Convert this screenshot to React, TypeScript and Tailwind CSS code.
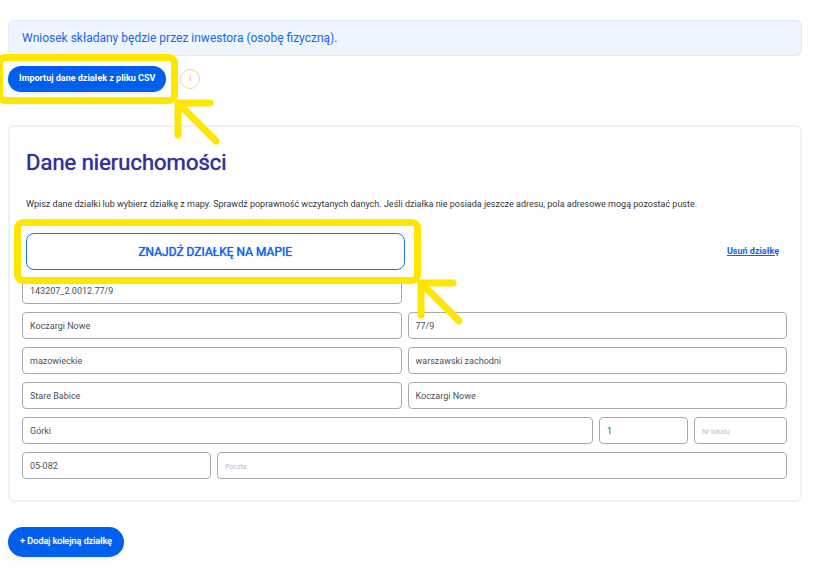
import { useState } from "react";
import type { ReactNode } from "react";

type FieldDef = {
  id: string;
  label: string;
  value: string;
};

const rows: { cols: string; fields: FieldDef[] }[] = [
  {
    cols: "grid-cols-2",
    fields: [{ id: "identyfikator", label: "Identyfikator działki", value: "143207_2.0012.77/9" }],
  },
  {
    cols: "grid-cols-2",
    fields: [
      { id: "obreb", label: "Obręb ewidencyjny", value: "Koczargi Nowe" },
      { id: "numer", label: "Nr działki", value: "77/9" },
    ],
  },
  {
    cols: "grid-cols-2",
    fields: [
      { id: "wojewodztwo", label: "Województwo", value: "mazowieckie" },
      { id: "powiat", label: "Powiat", value: "warszawski zachodni" },
    ],
  },
  {
    cols: "grid-cols-2",
    fields: [
      { id: "gmina", label: "Gmina", value: "Stare Babice" },
      { id: "miejscowosc", label: "Miejscowość", value: "Koczargi Nowe" },
    ],
  },
  {
    cols: "grid-cols-[571fr_89fr_93fr]",
    fields: [
      { id: "ulica", label: "Ulica", value: "Górki" },
      { id: "dom", label: "Nr domu", value: "1" },
      { id: "lokal", label: "Nr lokalu", value: "" },
    ],
  },
  {
    cols: "grid-cols-[189fr_570fr]",
    fields: [
      { id: "kod", label: "Kod pocztowy", value: "05-082" },
      { id: "poczta", label: "Poczta", value: "" },
    ],
  },
];

function Field({ id, label, value }: FieldDef) {
  const [text, setText] = useState(value);
  return (
    <input
      id={id}
      type="text"
      aria-label={label}
      placeholder={label}
      value={text}
      onChange={e => setText(e.target.value)}
      className="h-[27px] w-full min-w-0 rounded-[4px] border border-[#a9a9ab] bg-white px-[7px] text-[9px] text-[#4b5058] placeholder:text-[7px] placeholder:text-[#b9bcc8] focus:outline-none focus:border-[#005fec]"
    />
  );
}

/* Yellow frame with an arrow pointing at its bottom right corner */
function Highlight({ children, className, frame }: { children: ReactNode; className: string; frame: string }) {
  return (
    <div className={`relative ${className}`}>
      {children}
      <span className={`pointer-events-none absolute z-10 rounded-[9px] border-[7px] border-[#ffe600] ${frame}`}>
        <svg
          viewBox="0 0 48 48"
          className="absolute -right-[50px] -bottom-[49px] h-12 w-12"
          fill="none"
          stroke="#ffe600"
          strokeWidth="7"
          strokeLinecap="round"
          strokeLinejoin="round"
        >
          <path d="M37 5H5v32M5 5l38 38" />
        </svg>
      </span>
    </div>
  );
}

export default function App() {
  return (
    <main className="min-h-screen bg-white pt-5 pr-3 pb-4 pl-2 font-['Roboto',sans-serif]">
      <div className="flex h-9 items-center rounded-md border border-[#dcebfd] bg-[#eff5ff] px-[13px] text-[12px] text-[#1a66ea]">
        Wniosek składany będzie przez inwestora (osobę fizyczną).
      </div>

      <div className="mt-[10px] flex items-center gap-[14px]">
        <Highlight className="w-fit" frame="-inset-3">
          <button
            type="button"
            className="block h-[26px] rounded-full bg-[#005fec] px-[11px] text-[9px] font-bold text-white shadow-md shadow-black/5"
          >
            Importuj dane działek z pliku CSV
          </button>
        </Highlight>
        <button
          type="button"
          aria-label="Informacja"
          className="flex h-5 w-5 items-center justify-center rounded-full border border-[#fbd385] text-[9px] text-[#f5b95c]"
        >
          i
        </button>
      </div>

      <section className="mt-[33px] rounded-md border-2 border-[#eef1f5] pt-5 pr-[13px] pb-[21px] pl-3">
        <div className="px-1">
          <h1 className="text-[22px] leading-8 font-normal text-[#34309a] [text-shadow:0_0_1px_currentColor]">
            Dane nieruchomości
          </h1>
          <p className="mt-[17px] text-[9px] leading-4 text-[#33363b]">
            Wpisz dane działki lub wybierz działkę z mapy. Sprawdź poprawność wczytanych danych. Jeśli działka nie
            posiada jeszcze adresu, pola adresowe mogą pozostać puste.
          </p>
          <div className="mt-[21px] flex items-center justify-between">
            <Highlight className="w-1/2" frame="-inset-y-[14px] -right-4 -left-3">
              <button
                type="button"
                className="block h-[37px] w-full rounded-lg border border-[#2970ec] bg-white text-[12px] font-normal text-[#1162ea] [text-shadow:0_0_1px_currentColor]"
              >
                ZNAJDŹ DZIAŁKĘ NA MAPIE
              </button>
            </Highlight>
            <a href="#usun" className="pr-1 text-[9px] font-bold text-[#1162ea] underline">
              Usuń działkę
            </a>
          </div>
        </div>

        <form className="mt-[7px] flex flex-col gap-2">
          {rows.map((row, i) => (
            <div key={i} className={`grid gap-[6px] ${row.cols}`}>
              {row.fields.map(field => (
                <Field key={field.id} {...field} />
              ))}
            </div>
          ))}
        </form>
      </section>

      <button
        type="button"
        className="mt-[25px] h-[30px] rounded-full bg-[#005fec] px-3 text-[9px] font-normal text-white shadow-md shadow-black/5 [text-shadow:0_0_1px_currentColor]"
      >
        + Dodaj kolejną działkę
      </button>
    </main>
  );
}
